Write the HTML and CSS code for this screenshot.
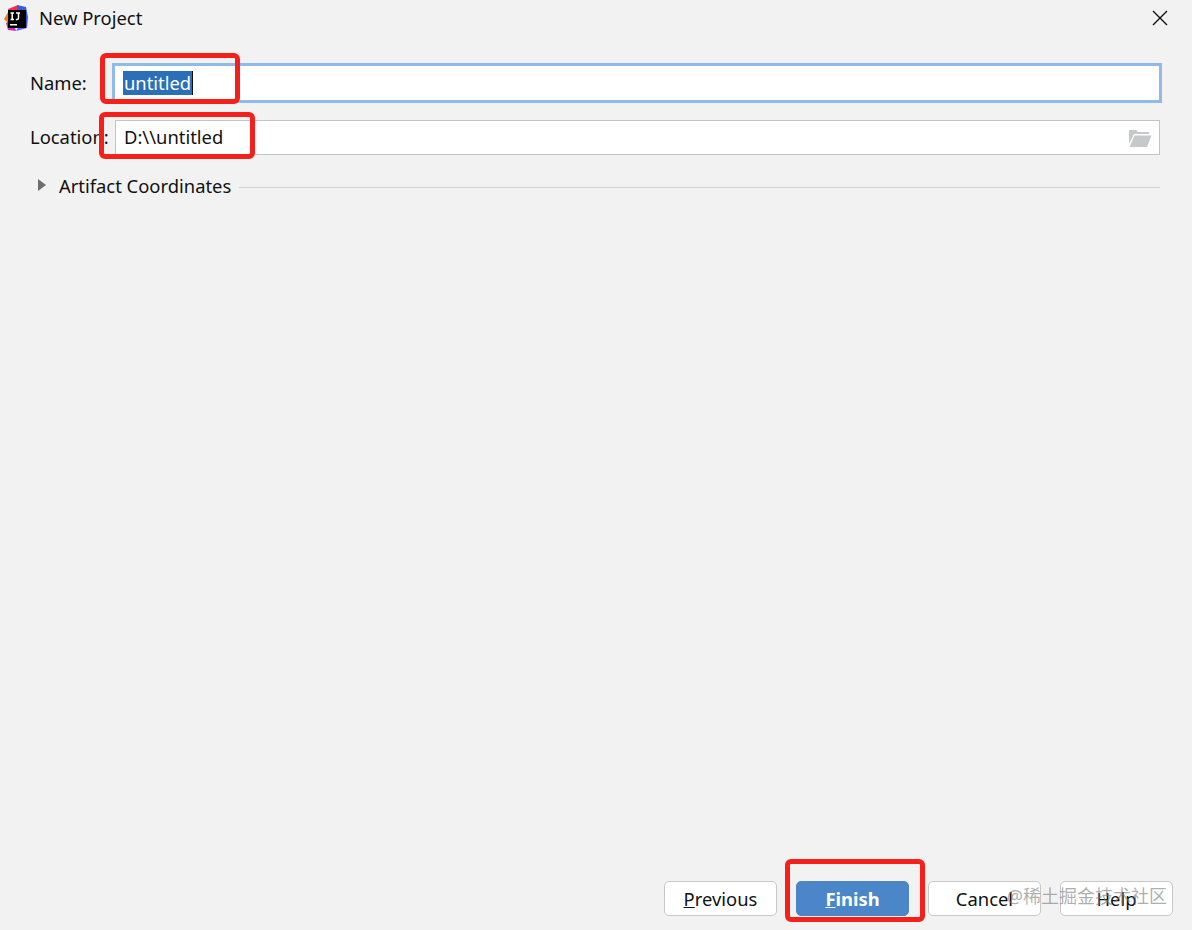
FILE: index.html
```html
<!DOCTYPE html>
<html lang="en">
<head>
    <meta charset="UTF-8">
    <meta name="viewport" content="width=device-width, initial-scale=1.0">
    <title>New Project</title>
    <link rel="stylesheet" href="styles.css">
</head>
<body>
    <div class="dialog">
        <div class="title-bar">
            <svg class="app-icon" width="24" height="26" viewBox="0 0 24 26">
                <path d="M0 14 L6 4 L12 9 L6 20 Z" fill="#f97a12"/>
                <path d="M4 4 L14 0 L18 6 L7 12 Z" fill="#fe2857"/>
                <path d="M13 0 L22 2 L24 12 L23 23 L14 10 Z" fill="#3b5bdb"/>
                <path d="M2 18 L8 14 L12 26 L4 25 Z" fill="#c930b5"/>
                <path d="M12 26 L23 23 L20 14 Z" fill="#6b57ff"/>
                <rect x="4" y="5" width="18" height="18" fill="#000"/>
                <rect x="6" y="19" width="7" height="1.5" fill="#fff"/>
                <path d="M6.500 8 H10 M8.200 8 V14.500 M6.500 14.500 H10 M12 8 H16 M14.500 8 V13 Q14.500 14.500 13 14.500 H11.800" fill="none" stroke="#fff" stroke-width="1.500"/>
            </svg>
            <span class="title">New Project</span>
            <svg class="close-icon" width="16" height="16" viewBox="0 0 16 16">
                <path d="M1 1 L15 15 M15 1 L1 15" stroke="#111" stroke-width="1.400" fill="none"/>
            </svg>
        </div>

        <div class="form">
            <div class="form-row name-row">
                <label class="field-label">Name:</label>
                <div class="text-field focused"><span class="selected">untitled</span></div>
            </div>
            <div class="form-row location-row">
                <label class="field-label">Location:</label>
                <div class="text-field">
                    <span>D:\\untitled</span>
                    <svg class="folder-icon" width="24" height="18" viewBox="0 0 24 18">
                        <path d="M1 1 H8 L10 3 H21 V5 H6 L1 15 Z" fill="#c6c9c9"/>
                        <path d="M6.500 6.500 H23.500 L19 18 H1.500 Z" fill="#c6c9c9"/>
                    </svg>
                </div>
            </div>
            <div class="section-row">
                <span class="arrow"></span>
                <span class="section-title">Artifact Coordinates</span>
                <span class="section-line"></span>
            </div>
        </div>

        <div class="footer">
            <button class="btn"><u>P</u>revious</button>
            <button class="btn primary"><u>F</u>inish</button>
            <button class="btn">Cancel</button>
            <button class="btn">Help</button>
        </div>

        <!-- Red annotation boxes drawn over the dialog -->
        <div class="mark mark-name"></div>
        <div class="mark mark-location"></div>
        <div class="mark mark-finish"></div>

        <div class="watermark">@稀土掘金技术社区</div>
    </div>
</body>
</html>
```

FILE: styles.css
```css
/* Global Styles */
body {
    margin: 0;
    font-family: "Noto Sans", "Noto Sans CJK SC", sans-serif;
    font-size: 18.4px;
    color: #111;
    background: #f2f2f2;
}

.dialog {
    position: relative;
    width: 1192px;
    height: 930px;
    display: flex;
    flex-direction: column;
    overflow: hidden;
}

/* Title bar */
.title-bar {
    display: flex;
    align-items: center;
    height: 36px;
    padding: 0 24px 0 4px;
}

.app-icon {
    margin-right: 11px;
}

.title {
    flex: 1;
    margin-top: -1px;
}

/* Form */
.form {
    padding: 0 32px 0 30px;
}

.form-row {
    display: flex;
    align-items: center;
}

.name-row {
    margin-top: 27px;
    height: 40px;
}

.location-row {
    margin-top: 17px;
    height: 35px;
}

.field-label {
    width: 85px;
    flex: none;
    margin-top: -2px;
}

.text-field {
    flex: 1;
    display: flex;
    align-items: center;
    justify-content: space-between;
    height: 100%;
    box-sizing: border-box;
    padding: 0 8px 2px;
    background: #fff;
    border: 1px solid #c4c4c4;
}

.text-field.focused {
    margin-left: -3px;
    margin-right: -2px;
    padding: 0 8px;
    border: 3px solid #8fbbe8;
}

.selected {
    background: #2b6fb8;
    color: #fff;
    padding: 0 1px;
    line-height: 24px;
    border-right: 1px solid #111;
}

.folder-icon {
    margin: 2px -1px 0 0;
}

.section-row {
    display: flex;
    align-items: center;
    margin-top: 17px;
    height: 26px;
}

.arrow {
    width: 0;
    height: 0;
    margin: 0 13px 0 8px;
    border-left: 8px solid #6e6e6e;
    border-top: 6px solid transparent;
    border-bottom: 6px solid transparent;
}

.section-title {
    margin-right: 8px;
}

.section-line {
    flex: 1;
    height: 1px;
    margin-top: 4px;
    background: #cfcfcf;
}

/* Buttons */
.footer {
    margin-top: auto;
    display: flex;
    justify-content: flex-end;
    gap: 19px;
    padding: 0 19px 14px 0;
}

.btn {
    width: 113px;
    height: 35px;
    padding: 0;
    font-family: inherit;
    font-size: 18.4px;
    color: #111;
    background: #fff;
    border: 1px solid #c8c8c8;
    border-radius: 5px;
}

.btn.primary {
    background: #4a86c8;
    border-color: #4a86c8;
    color: #fff;
    font-weight: 700;
}

/* Annotations */
.mark {
    position: absolute;
    box-sizing: border-box;
    border: 5px solid #f5201a;
    border-radius: 6px;
}

.mark-name {
    left: 100px;
    top: 53px;
    width: 140px;
    height: 51px;
}

.mark-location {
    left: 99px;
    top: 112px;
    width: 156px;
    height: 47px;
}

.mark-finish {
    left: 785px;
    top: 859px;
    width: 140px;
    height: 63px;
}

.watermark {
    position: absolute;
    right: 25px;
    top: 882px;
    font-size: 18px;
    color: rgba(120, 120, 120, 0.6);
}
```
